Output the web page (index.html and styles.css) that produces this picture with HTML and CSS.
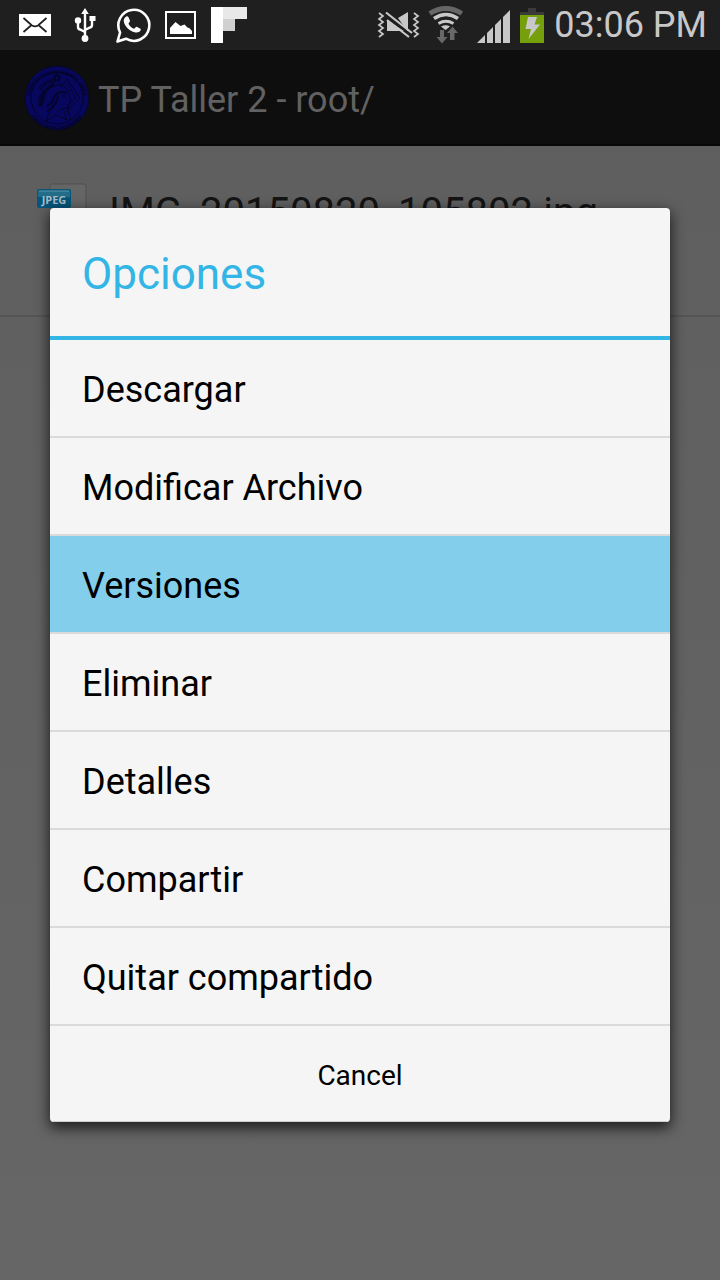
FILE: index.html
```html
<!DOCTYPE html>
<html lang="es">
<head>
<meta charset="utf-8">
<meta name="viewport" content="width=device-width, initial-scale=1">
<title>TP Taller 2</title>
<link rel="stylesheet" href="styles.css">
</head>
<body>
<div class="screen">
  <header class="status-bar">
    <div class="notifications">
      <svg class="icon" width="250" height="50" viewBox="0 0 250 50" aria-hidden="true">
        <rect x="19" y="14" width="32" height="22" fill="#fff"/>
        <path d="M23.500 18l8.500 7.500q3 1.800 6 0L46.500 18M23.500 32l7.500-6.500M46.500 32L39 25.500" fill="none" stroke="#1f1f1f" stroke-width="1.700"/>
        <g fill="none" stroke="#fff" stroke-width="2.400">
          <path d="M85 12v24M78 21v6q0 2 2 2.500l5 2.500M92 18v7q0 2-2 2.500l-5 2.500"/>
        </g>
        <path d="M85 8l3.800 6h-7.600zM89.500 16h6v5h-6z" fill="#fff"/>
        <circle cx="78" cy="20.500" r="3.200" fill="#fff"/>
        <circle cx="85" cy="38.500" r="3.400" fill="#fff"/>
        <path d="M117.500 41.500l2.600-9A15.500 15.500 0 1 1 126 38.700z" fill="none" stroke="#fff" stroke-width="2.600" stroke-linejoin="round"/>
        <path d="M125.500 17c1-1 2.500-1 3 .2l1.500 3.600c.3 1-1.500 2.300-1.500 3 1 2.200 3 4.200 5.500 5 .8 0 1.800-2.300 2.800-2l3.600 1.900c1 .7 0 2.300-1 3-2.200 1.400-5 .9-8-.7-3.800-2-6.800-5.600-7.500-9-.4-2 .2-4 1.600-5z" fill="#fff"/>
        <rect x="166" y="12" width="29" height="26" fill="none" stroke="#fff" stroke-width="2"/>
        <path d="M170 34v-6l5.500-6 5 4 4-1.500 3 3 2 .8 2.500 2.700v3z" fill="#fff"/>
        <path d="M211 7h12v36h-12z" fill="#fff"/>
        <path d="M223 7h24v12h-24z" fill="#e8e8e8"/>
        <path d="M223 19h12v12h-12z" fill="#d0d0d0"/>
      </svg>
    </div>
    <div class="system">
      <svg class="icon" width="168" height="50" viewBox="376 0 168 50" aria-hidden="true">
        <g fill="none" stroke="#c8c8c8" stroke-width="1.700">
          <path d="M379 13l4 3-4 3 4 3-4 3 4 3-4 3 4 3-4 3"/>
          <path d="M414 13l4 3-4 3 4 3-4 3 4 3-4 3 4 3-4 3"/>
        </g>
        <path d="M387 20v11h17zM398 18l10-6v20z" fill="#c8c8c8"/>
        <path d="M385.500 15l26 20" stroke="#1f1f1f" stroke-width="2"/>
        <path d="M386 12.500l26 20.500M387 20l22 17" stroke="#c8c8c8" stroke-width="2.200"/>
        <path d="M429.800 13.500q16-10 32 0" fill="none" stroke="#666" stroke-width="5"/>
        <path d="M434 18.500q12-8 24 0" fill="none" stroke="#c8c8c8" stroke-width="3.600"/>
        <path d="M438.500 23.500q7.500-4.500 15 0" fill="none" stroke="#c8c8c8" stroke-width="3"/>
        <path d="M441 26.500q5-2.500 9 0l-4.500 3.500z" fill="#c8c8c8"/>
        <path d="M440 30h4v7h3.500l-5.500 6.500-5.500-6.500h3.500zM450 40v-7h-3l5.500-6.500L458 33h-3.500v7z" fill="#686868"/>
        <path d="M477 43l8-8v8zM487 43V33l6-6v16zM495 43V25l6-6v24zM503 43V17l7-7v33z" fill="#c8c8c8"/>
        <path d="M520 12h8V8h8v4h8v3h-24z" fill="#3a3a3a"/>
        <path d="M520 15h24v28h-24z" fill="#75a00c"/>
        <path d="M528 17h9l-2.500 7.500h5.500L528.500 39l2.500-10h-5.500z" fill="#c8c8c8"/>
      </svg>
      <time class="clock" datetime="15:06">03:06 PM</time>
    </div>
  </header>
  <div class="app">
    <div class="action-bar">
      <svg class="seal" viewBox="0 0 66 66" aria-hidden="true">
        <defs>
          <path id="seal-top" d="M5 37a28 28 0 1 1 56 0"/>
          <path id="seal-bottom" d="M2 34a31 31 0 0 0 62 0"/>
        </defs>
        <circle cx="33" cy="33" r="32" fill="#07075e" stroke="#070720" stroke-width="1"/>
        <circle cx="33" cy="33" r="26" fill="none" stroke="#04042c" stroke-width="1"/>
        <g class="seal-text">
          <text text-anchor="middle"><textPath href="#seal-top" startOffset="50%">UNIVERSIDAD DE BUENOS AIRES</textPath></text>
          <text text-anchor="middle"><textPath href="#seal-bottom" startOffset="50%">FACULTAD DE INGENIERIA</textPath></text>
        </g>
        <g fill="none" stroke="#04042c" stroke-width="1">
          <path d="M43 14L56 33 42 47M43 14l-6 8M43 18L52 33 44 41"/>
          <circle cx="33" cy="13" r="2.500" stroke-width="2"/>
          <path d="M33 5v5M31 15l-2 6M35 15l2 6M26 46l-4 10 10-6 11 5-3-9M44 45l3 10"/>
          <path d="M20 38q-1-16 14-18 9 1 11 8l1 5 2 3-3 1 1 2-2 1v3l-7 1-4 4M38 31l4 0"/>
          <path d="M16 40q2-16 14-22M18 41q-1-15 11-20" stroke-width="1.400"/>
          <path d="M16 24q6-8 13-9" stroke-width="4" stroke-dasharray="1.500 1"/>
          <path d="M16 41q-1-10 5-16" stroke-width="4" stroke-dasharray="1.500 1"/>
          <path d="M43 28q-9-3-13 4-1 6-7 9M34 30q0 6-4 10-2 4-7 6" stroke-width="2"/>
        </g>
      </svg>
      <h1 class="app-title">TP Taller 2 - root/</h1>
    </div>
    <main class="files">
      <div class="file">
        <svg class="file-icon" width="52" height="64" viewBox="0 0 52 64" aria-hidden="true">
          <rect x="13" y="1" width="36" height="50" rx="2" fill="#656565" stroke="#515151"/>
          <rect x="0" y="6" width="34" height="19" rx="2" fill="#06567a"/>
          <path d="M1 8h32v6H1z" fill="#236d88"/>
          <path d="M2 8h30" stroke="#5f96a9"/>
          <text class="file-type" x="17" y="21" text-anchor="middle">JPEG</text>
        </svg>
        <span class="file-name">IMG_20150820_105802.jpg</span>
      </div>
    </main>
    <div class="overlay">
      <section class="dialog" role="dialog" aria-labelledby="dialog-title">
        <h2 class="dialog-title" id="dialog-title">Opciones</h2>
        <button class="option" type="button">Descargar</button>
        <button class="option" type="button">Modificar Archivo</button>
        <button class="option selected" type="button">Versiones</button>
        <button class="option" type="button">Eliminar</button>
        <button class="option" type="button">Detalles</button>
        <button class="option" type="button">Compartir</button>
        <button class="option" type="button">Quitar compartido</button>
        <button class="cancel" type="button">Cancel</button>
      </section>
    </div>
  </div>
</div>
</body>
</html>
```
FILE: styles.css
```css
* {
  box-sizing: border-box;
}

body {
  margin: 0;
  font-family: Roboto, "Liberation Sans", sans-serif;
}

.screen {
  display: flex;
  flex-direction: column;
  min-height: 100vh;
}

.status-bar {
  display: flex;
  justify-content: space-between;
  height: 50px;
  background: #1f1f1f;
}

.icon {
  display: block;
}

.system {
  display: flex;
  align-items: center;
  gap: 10px;
  padding-right: 13px;
}

.clock {
  color: #c8c8c8;
  font-size: 36px;
  line-height: 50px;
  white-space: nowrap;
}

.app {
  position: relative;
  display: flex;
  flex: 1;
  flex-direction: column;
  background: linear-gradient(#5e5e5e, #666);
}

.action-bar {
  display: flex;
  align-items: center;
  gap: 8px;
  height: 96px;
  padding: 2px 24px 0;
  background: #0e0e0e;
  border-bottom: 2px solid #080808;
}

.seal {
  width: 66px;
  height: 66px;
}

.seal-text {
  fill: #04041c;
  font-size: 5px;
  font-weight: bold;
}

.app-title {
  margin: 0;
  padding-top: 4px;
  color: #616161;
  font-size: 36px;
  font-weight: 400;
  line-height: 48px;
}

.file {
  display: flex;
  align-items: flex-start;
  gap: 20px;
  height: 171px;
  padding: 37px 37px 0;
  border-bottom: 2px solid #555;
}

.file-type {
  fill: #a9bcc4;
  font-family: "Open Sans", sans-serif;
  font-size: 11px;
  font-weight: bold;
}

.file-name {
  color: #141414;
  font-size: 40px;
  line-height: 60px;
}

.overlay {
  position: absolute;
  inset: 0;
  display: flex;
  align-items: center;
  padding: 0 50px;
}

.dialog {
  display: flex;
  flex: 1;
  flex-direction: column;
  overflow: hidden;
  background: #f5f5f5;
  border-radius: 4px;
  box-shadow: 0 5px 14px 1px rgba(0, 0, 0, 0.7);
}

.dialog-title {
  margin: 0;
  padding: 38px 32px 34px;
  color: #33b5e5;
  border-bottom: 4px solid #33b5e5;
  font-size: 44px;
  font-weight: 400;
  line-height: 56px;
}

.option,
.cancel {
  margin: 0;
  border: 0;
  background: none;
  color: #000;
  font-family: inherit;
}

.option {
  padding: 26px 32px 22px;
  border-bottom: 2px solid #dadada;
  font-size: 36px;
  line-height: 48px;
  text-align: left;
}

.selected {
  background: #82ceeb;
}

.cancel {
  padding: 34px 32px 29px;
  border-bottom: 1px solid #d0d0d0;
  font-size: 28px;
  line-height: 32px;
  text-align: center;
}
```
